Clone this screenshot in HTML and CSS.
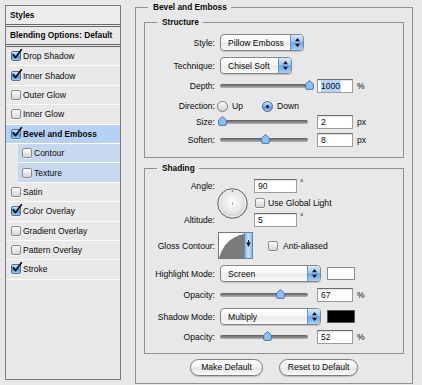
FILE: index.html
```html
<!DOCTYPE html>
<html>
<head>
<meta charset="utf-8">
<link rel="stylesheet" href="styles.css">
</head>
<body>
<div class="dialog">
  <div class="sidebar">
    <div class="side-head">Styles</div>
    <div class="side-blend">Blending Options: Default</div>
    <ul class="side-list">
      <li class="item"><span class="cb on"><svg viewBox="0 0 12 12"><path d="M2.2 5.6 L4.6 8.6 L10.4 0.8"/></svg></span>Drop Shadow</li>
      <li class="item"><span class="cb on"><svg viewBox="0 0 12 12"><path d="M2.2 5.6 L4.6 8.6 L10.4 0.8"/></svg></span>Inner Shadow</li>
      <li class="item"><span class="cb"></span>Outer Glow</li>
      <li class="item"><span class="cb"></span>Inner Glow</li>
      <li class="item sel"><span class="cb on"><svg viewBox="0 0 12 12"><path d="M2.2 5.6 L4.6 8.6 L10.4 0.8"/></svg></span>Bevel and Emboss</li>
      <li class="item sub"><span class="cb"></span>Contour</li>
      <li class="item sub"><span class="cb"></span>Texture</li>
      <li class="item"><span class="cb"></span>Satin</li>
      <li class="item"><span class="cb on"><svg viewBox="0 0 12 12"><path d="M2.2 5.6 L4.6 8.6 L10.4 0.8"/></svg></span>Color Overlay</li>
      <li class="item"><span class="cb"></span>Gradient Overlay</li>
      <li class="item"><span class="cb"></span>Pattern Overlay</li>
      <li class="item"><span class="cb on"><svg viewBox="0 0 12 12"><path d="M2.2 5.6 L4.6 8.6 L10.4 0.8"/></svg></span>Stroke</li>
    </ul>
  </div>

  <fieldset class="group outer">
    <legend>Bevel and Emboss</legend>

    <fieldset class="group inner structure">
      <legend>Structure</legend>

      <div class="row r-pop m6">
        <span class="lbl">Style:</span>
        <div class="popup w84"><span>Pillow Emboss</span><span class="arr"><svg viewBox="0 0 13 15"><path d="M4 6.2 L9 6.2 L6.5 3 Z M4 8.8 L9 8.8 L6.5 12 Z"/></svg></span></div>
      </div>

      <div class="row r-pop m6">
        <span class="lbl">Technique:</span>
        <div class="popup w72"><span>Chisel Soft</span><span class="arr"><svg viewBox="0 0 13 15"><path d="M4 6.2 L9 6.2 L6.5 3 Z M4 8.8 L9 8.8 L6.5 12 Z"/></svg></span></div>
      </div>

      <div class="row m4">
        <span class="lbl">Depth:</span>
        <div class="slider"><span class="track"></span><svg class="thumb" style="--v:1" viewBox="0 0 9 10"><path d="M4.5 0.6 L8.4 4 L8.4 8 Q8.4 9.4 7 9.4 L2 9.4 Q0.6 9.4 0.6 8 L0.6 4 Z"/></svg></div>
        <div class="num"><span class="hl">1000</span></div>
        <span class="unit">%</span>
      </div>

      <div class="row m4">
        <span class="lbl">Direction:</span>
        <span class="radio first"></span><span class="rlabel">Up</span>
        <span class="radio on"></span><span class="rlabel">Down</span>
      </div>

      <div class="row m0">
        <span class="lbl">Size:</span>
        <div class="slider"><span class="track"></span><svg class="thumb" style="--v:0.008" viewBox="0 0 9 10"><path d="M4.5 0.6 L8.4 4 L8.4 8 Q8.4 9.4 7 9.4 L2 9.4 Q0.6 9.4 0.6 8 L0.6 4 Z"/></svg></div>
        <div class="num">2</div>
        <span class="unit">px</span>
      </div>

      <div class="row m2">
        <span class="lbl">Soften:</span>
        <div class="slider"><span class="track"></span><svg class="thumb" style="--v:0.5" viewBox="0 0 9 10"><path d="M4.5 0.6 L8.4 4 L8.4 8 Q8.4 9.4 7 9.4 L2 9.4 Q0.6 9.4 0.6 8 L0.6 4 Z"/></svg></div>
        <div class="num">8</div>
        <span class="unit">px</span>
      </div>
    </fieldset>

    <fieldset class="group inner shading">
      <legend>Shading</legend>

      <div class="angle-grid">
        <span class="lbl g-angle">Angle:</span>
        <span class="lbl g-alt">Altitude:</span>
        <svg class="dial" viewBox="0 0 31 31">
          <defs>
            <radialGradient id="dg" cx="50%" cy="45%" r="55%">
              <stop offset="0" stop-color="#ffffff"/>
              <stop offset="0.65" stop-color="#e6e6e6"/>
              <stop offset="1" stop-color="#c4c4c4"/>
            </radialGradient>
          </defs>
          <circle cx="15.5" cy="15.5" r="14.8" fill="url(#dg)" stroke="#666" stroke-width="1"/>
          <circle cx="15.5" cy="15.5" r="13.3" fill="none" stroke="#fff" stroke-opacity="0.7"/>
          <line x1="15.5" y1="14" x2="15.5" y2="17" stroke="#9a9a9a" stroke-width="0.8"/>
          <circle cx="15.5" cy="3" r="1" fill="#8a8a8a"/>
        </svg>
        <div class="g-in1 cell"><div class="num w43">90</div><span class="deg">°</span></div>
        <div class="g-chk cell"><span class="cb plain"></span><span class="chk-label">Use Global Light</span></div>
        <div class="g-in2 cell"><div class="num w43">5</div><span class="deg">°</span></div>
      </div>

      <div class="row r-gloss">
        <span class="lbl">Gloss Contour:</span>
        <svg class="contour" viewBox="0 0 35 27">
          <rect x="0.5" y="0.5" width="34" height="26" fill="#fff" stroke="#777"/>
          <path d="M1 26 C 5 13, 12 5, 26 2 L26 26 Z" fill="#7b7b7b"/>
          <defs>
            <linearGradient id="cg" x1="0" y1="0" x2="1" y2="0">
              <stop offset="0" stop-color="#7fb4ee"/>
              <stop offset="0.5" stop-color="#c9e0f8"/>
              <stop offset="1" stop-color="#7fb4ee"/>
            </linearGradient>
          </defs>
          <rect x="26.5" y="0.5" width="8" height="26" fill="url(#cg)" stroke="#5d87bd"/>
          <path d="M28.3 10.5 L32.7 10.5 L30.5 15 Z M30 8 L31 8 L31 11 L30 11 Z" fill="#111"/>
        </svg>
        <span class="cb plain aa"></span><span class="chk-label aal">Anti-aliased</span>
      </div>

      <div class="row r-pop m6">
        <span class="lbl">Highlight Mode:</span>
        <div class="popup w101"><span>Screen</span><span class="arr"><svg viewBox="0 0 13 15"><path d="M4 6.2 L9 6.2 L6.5 3 Z M4 8.8 L9 8.8 L6.5 12 Z"/></svg></span></div>
        <span class="swatch white"></span>
      </div>

      <div class="row m5">
        <span class="lbl">Opacity:</span>
        <div class="slider"><span class="track"></span><svg class="thumb" style="--v:0.67" viewBox="0 0 9 10"><path d="M4.5 0.6 L8.4 4 L8.4 8 Q8.4 9.4 7 9.4 L2 9.4 Q0.6 9.4 0.6 8 L0.6 4 Z"/></svg></div>
        <div class="num">67</div>
        <span class="unit">%</span>
      </div>

      <div class="row r-pop m5">
        <span class="lbl">Shadow Mode:</span>
        <div class="popup w101"><span>Multiply</span><span class="arr"><svg viewBox="0 0 13 15"><path d="M4 6.2 L9 6.2 L6.5 3 Z M4 8.8 L9 8.8 L6.5 12 Z"/></svg></span></div>
        <span class="swatch black"></span>
      </div>

      <div class="row m4">
        <span class="lbl">Opacity:</span>
        <div class="slider"><span class="track"></span><svg class="thumb" style="--v:0.52" viewBox="0 0 9 10"><path d="M4.5 0.6 L8.4 4 L8.4 8 Q8.4 9.4 7 9.4 L2 9.4 Q0.6 9.4 0.6 8 L0.6 4 Z"/></svg></div>
        <div class="num">52</div>
        <span class="unit">%</span>
      </div>
    </fieldset>

    <div class="buttons">
      <div class="btn b-make">Make Default</div>
      <div class="btn b-reset">Reset to Default</div>
    </div>
  </fieldset>
</div>
</body>
</html>
```

FILE: styles.css
```css
* { box-sizing: border-box; }

body {
  margin: 0;
  background: #e8e8e8;
  font-family: "Liberation Sans", Arial, sans-serif;
  font-size: 8.6px;
  color: #0a0a0a;
}

.dialog {
  display: flex;
  align-items: flex-start;
  padding-left: 5px;
  width: 422px;
  height: 385px;
  overflow: hidden;
}

/* ---------- sidebar ---------- */
.sidebar {
  margin-top: 5px;
  width: 116px;
  height: 375px;
  flex: none;
  border: 1px solid #7b7b7b;
  background: #e9e9e9;
}

.side-head {
  height: 21px;
  padding-left: 4px;
  border-bottom: 3px double #666;
  font-weight: bold;
  font-size: 8.3px;
  line-height: 18px;
  background: #ececec;
}

.side-blend {
  height: 20px;
  padding-left: 4px;
  border-bottom: 3px double #666;
  font-weight: bold;
  font-size: 8.3px;
  line-height: 17px;
}

.side-list {
  list-style: none;
  margin: 0;
  padding: 0;
}

.item {
  height: 19.4px;
  display: flex;
  align-items: center;
  gap: 2px;
  padding-left: 5px;
  border-bottom: 1px solid #fbfbfb;
  font-size: 8.5px;
}

.item.sel {
  background: #b6d1f3;
  font-weight: bold;
  font-size: 8.3px;
}

.item.sub {
  margin-left: 12px;
  padding-left: 4px;
  background: #c7d8ee;
}

/* ---------- checkbox ---------- */
.cb {
  position: relative;
  flex: none;
  width: 10px;
  height: 10px;
  border: 1px solid #8a8a8a;
  border-radius: 2px;
  background: linear-gradient(#ffffff, #e6e6e6 55%, #d6d6d6);
  box-shadow: 0 1px 0 rgba(255,255,255,0.6);
}

.cb.on {
  border-color: #4b6f9e;
  background: linear-gradient(#cfe4fb, #78afee 50%, #4f93e2 55%, #9fcaf5);
}

.cb svg {
  position: absolute;
  left: -1px;
  top: -3px;
  width: 12px;
  height: 12px;
  overflow: visible;
}

.cb svg path {
  fill: none;
  stroke: #111;
  stroke-width: 1.7;
  stroke-linecap: round;
  stroke-linejoin: round;
}

/* ---------- group boxes ---------- */
.group {
  margin: 0;
  min-width: 0;
  border: 1px solid #909090;
  padding: 0;
}

.group > legend {
  font-weight: bold;
  font-size: 8.3px;
  line-height: 12px;
  padding: 0 4px 0 5px;
}

.outer {
  margin: 1px 0 0 14px;
  width: 278px;
  flex: none;
  padding: 0 8px 7px;
}

.outer > legend { margin-left: 4px; }

.inner > legend { margin-left: 12px; }

.structure {
  margin-top: 3px;
  padding-bottom: 9px;
}

.shading {
  margin-top: 4px;
  padding-bottom: 8px;
}

/* ---------- rows ---------- */
.row {
  display: flex;
  align-items: center;
  height: 16px;
}

.r-pop { height: 17px; }

.m0 { margin-top: 0; }
.m2 { margin-top: 2px; }
.m4 { margin-top: 4px; }
.m5 { margin-top: 5px; }
.m6 { margin-top: 6px; }

.lbl {
  width: 70px;
  flex: none;
  text-align: right;
}

.row > .lbl + * { margin-left: 5px; }

/* ---------- popup ---------- */
.popup {
  position: relative;
  height: 17px;
  flex: none;
  display: flex;
  align-items: center;
  padding-left: 7px;
  border: 1px solid #868686;
  border-radius: 4px;
  background: linear-gradient(#ffffff, #f6f6f6 48%, #e9e9e9 52%, #f9f9f9);
  box-shadow: 0 1px 1px rgba(0,0,0,0.18);
  overflow: hidden;
}

.w84 { width: 84px; }
.w72 { width: 72px; }
.w101 { width: 101px; }

.popup .arr {
  position: absolute;
  right: 0;
  top: 0;
  bottom: 0;
  width: 13px;
  border-left: 1px solid #6f92c0;
  background: linear-gradient(#d9eafc, #9cc7f3 45%, #66a5ea 52%, #a8d1f7);
}

.popup .arr svg {
  display: block;
  width: 13px;
  height: 15px;
}

.popup .arr path { fill: #111; }

/* ---------- slider ---------- */
.slider {
  position: relative;
  width: 90px;
  height: 14px;
  flex: none;
}

.track {
  position: absolute;
  left: 0;
  right: 2px;
  top: 5px;
  height: 4px;
  border-radius: 2px;
  background: linear-gradient(#5c5c5c, #8f8f8f 60%, #b5b5b5);
}

.thumb {
  position: absolute;
  top: 1px;
  left: calc(var(--v) * 87px - 2.5px);
  width: 9px;
  height: 10px;
}

.thumb path {
  fill: #8ec0f2;
  stroke: #3d6ea8;
  stroke-width: 0.9;
}

/* ---------- number field ---------- */
.num {
  width: 36px;
  height: 14px;
  flex: none;
  margin-left: 7px;
  padding-left: 3px;
  border: 1px solid #9b9b9b;
  border-top-color: #6c6c6c;
  background: #fff;
  line-height: 12px;
  box-shadow: inset 0 1px 1px rgba(0,0,0,0.12);
}

.w43 { width: 43px; margin-left: 0; }

.hl {
  display: inline-block;
  background: #b5d4fb;
  padding-right: 1px;
}

.unit { margin-left: 4px; }

/* ---------- radio ---------- */
.radio {
  position: relative;
  width: 11px;
  height: 11px;
  flex: none;
  border: 1px solid #7a7a7a;
  border-radius: 50%;
  background: linear-gradient(#ffffff, #e4e4e4 55%, #d4d4d4);
}

.row > .radio.first { margin-left: 2px; }

.radio.on {
  margin-left: 19px;
  border-color: #44689a;
  background: linear-gradient(#cfe4fb, #78afee 50%, #4f93e2 55%, #9fcaf5);
}

.radio.on::after {
  content: "";
  position: absolute;
  left: 3px;
  top: 3px;
  width: 3px;
  height: 3px;
  border-radius: 50%;
  background: #111;
}

.rlabel { margin-left: 4px; }

/* ---------- shading top ---------- */
.angle-grid {
  display: grid;
  grid-template-columns: 70px 39px auto;
  grid-template-rows: 16px 18px 16px;
  align-items: center;
  margin-top: 4px;
}

.g-angle { grid-column: 1; grid-row: 1; }
.g-alt { grid-column: 1; grid-row: 3; }

.dial {
  grid-column: 2;
  grid-row: 1 / 4;
  width: 31px;
  height: 31px;
  margin-left: 2px;
}

.cell {
  display: flex;
  align-items: center;
  grid-column: 3;
}

.g-in1 { grid-row: 1; }
.g-chk { grid-row: 2; }
.g-in2 { grid-row: 3; }

.deg {
  align-self: flex-start;
  margin-left: 3px;
  line-height: 8px;
}

.cb.plain { margin-left: 1px; }

.chk-label { margin-left: 3px; }

.r-gloss {
  height: 27px;
  margin-top: 4px;
}

.row > .lbl + .contour { margin-left: 3px; }

.contour {
  width: 35px;
  height: 27px;
  flex: none;
}

.cb.aa { margin-left: 15px; }

.aal { margin-left: 5px; }

.swatch {
  width: 28px;
  height: 13px;
  flex: none;
  margin-left: 6px;
  border: 1px solid #8a8a8a;
}

.swatch.white { background: #fff; }
.swatch.black { background: #000; border-color: #555; }

/* ---------- buttons ---------- */
.buttons {
  display: flex;
  justify-content: center;
  gap: 16px;
  margin-top: 5px;
}

.btn {
  height: 17px;
  border: 1px solid #7c7c7c;
  border-radius: 9px;
  background: linear-gradient(#ffffff, #f3f3f3 48%, #e4e4e4 52%, #fbfbfb);
  box-shadow: 0 1px 1px rgba(0,0,0,0.2);
  text-align: center;
  line-height: 15px;
}

.b-make { width: 73px; }
.b-reset { width: 79px; }
```
